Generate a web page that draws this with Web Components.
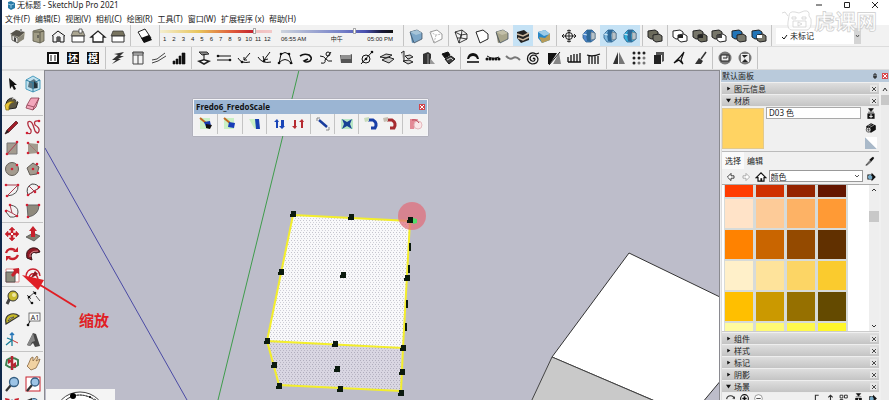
<!DOCTYPE html>
<html lang="zh-CN">
<head>
<meta charset="utf-8">
<title>无标题 - SketchUp Pro 2021</title>
<style>
  body {
    margin: 0;
    font: 8px/12px "Noto Sans", "Noto Sans CJK SC", sans-serif;
    color: #222;
    background: #f0f0f0;
  }
</style>
</head>
<body>
<su-app>
  <su-titlebar slot="top" name="无标题 - SketchUp Pro 2021"></su-titlebar>
  <su-menubar slot="top" items="文件(F)|编辑(E)|视图(V)|相机(C)|绘图(R)|工具(T)|窗口(W)|扩展程序 (x)|帮助(H)"></su-menubar>

  <su-toolbar slot="top" style="height: 22px; padding-left: 4px">
    <su-group icons="iso box front house2 home shed" label="视图" style="width: 125px"></su-group>
    <su-group icons="shadow" label="阴影" style="width: 29px"></su-group>
    <su-shadows></su-shadows>
    <su-group icons="xray backedge" label="样式" style="width: 45px"></su-group>
    <su-group icons="wire hidden shaded textured mono" active="textured" label="样式" style="width: 108px"></su-group>
    <su-group icons="target section section1 section2" active="section1 section2" label="截面" style="width: 86px"></su-group>
    <su-group icons="shell" label="实体" style="width: 25px"></su-group>
    <su-group icons="intersect union subtract trim split" label="实体工具" style="width: 104px"></su-group>
    <su-tagbox></su-tagbox>
  </su-toolbar>

  <su-toolbar slot="top" style="height: 23px; padding-left: 39px">
    <su-group icons="sheet char1 char2" label="插件" style="width: 65px"></su-group>
    <su-group icons="zig window slope stairs" label="建筑" style="width: 86px"></su-group>
    <su-group icons="drop beam curve1 curve2 arch hook pipe slab circ layers1 layers2 door solids" label="曲面" style="width: 269px"></su-group>
    <su-group icons="bridge dots wave spiral cut comb fence" label="工具" style="width: 146px"></su-group>
    <su-group icons="mirror grid9 copy compass broom" label="阵列" style="width: 106px"></su-group>
    <su-group icons="round1 round2" label="清理" style="width: 45px"></su-group>
  </su-toolbar>

  <su-toolbox slot="left">
    <su-group vertical icons="select component paint eraser" label="选择" style="height: 43px"></su-group>
    <su-group vertical icons="pencil freehand rect rrect circle polygon arc arc2 arc3 pie" label="绘图" style="height: 107px"></su-group>
    <su-group vertical icons="move pushpull rotate follow scale offset" label="编辑" style="height: 64px"></su-group>
    <su-group vertical icons="tape dimension protractor text axes text3d" label="测量" style="height: 65px"></su-group>
    <su-group vertical icons="orbit pan zoom zoomwin extents prev" label="相机" style="height: 65px"></su-group>
  </su-toolbox>

  <su-canvas slot="main">
    <su-floatbar name="Fredo6_FredoScale">
      <su-group icons="fs1" label="缩放" style="width: 24px"></su-group>
      <su-group icons="fs2" label="缩放" style="width: 25px"></su-group>
      <su-group icons="fs3" label="锥化" style="width: 24px"></su-group>
      <su-group icons="fsblue fsred" label="剪切" style="width: 44px"></su-group>
      <su-group icons="fs4" label="拉伸" style="width: 24px"></su-group>
      <su-group icons="fs5" label="扭转" style="width: 24px"></su-group>
      <su-group icons="fs6 fs7" label="弯曲" style="width: 44px"></su-group>
      <su-group icons="fs8" label="设置" style="width: 24px; border-right: 0"></su-group>
    </su-floatbar>
    <su-note slot="note">缩放</su-note>
  </su-canvas>

  <su-tray slot="right" name="默认面板">
    <su-section name="图元信息"></su-section>
    <su-section name="材质" open><su-materials></su-materials></su-section>
    <su-section name="组件"></su-section>
    <su-section name="样式"></su-section>
    <su-section name="标记"></su-section>
    <su-section name="阴影"></su-section>
    <su-section name="场景" open><su-scenes></su-scenes></su-section>
  </su-tray>
</su-app>

<script>
// 20x20 drawings, one per tool
const K = 'fill="none" stroke="#111"';
const R = 'fill="none" stroke="#a84050" stroke-width="1"';
const dot = (x, y, c = '#d22035') => `<circle cx="${x}" cy="${y}" r="1.3" fill="${c}"/>`;
const cube = (a, b, c) => `<path d="M4 6L11 4L11 15L6 17Z" fill="${a}"/><path d="M4 6L11 4L16 7L16 13L8 17Z" fill="${b}" stroke="#345" stroke-width=".7"/><path d="M4 6L11 4L16 7L10 9Z" fill="${c}"/>`;
const twoBoxes = (a, b) => `<path d="M3 5L10 4L13 6V12L6 13L3 11Z" fill="${a}" stroke="#222"/><path d="M8 9L14 8L17 10V15L11 16L8 14Z" fill="${b}" stroke="#222"/>`;
const sect = (c) => `<path d="M4 8L8 4L13 4L16 7V13L12 16L7 16L4 12Z" fill="${c}" stroke="#2b5f8c" stroke-width=".8"/><path d="M8 4L13 4L11 9L12 16L8 15L7 9Z" fill="#2d6796"/><path d="M12 6L16 7V13L12 14Z" fill="#b9c3c9" stroke="#5c6d78" stroke-width=".6"/><path d="M4 8L8 9" stroke="#d5ecf8"/>`;
const glyph = (t) => `<rect x="4" y="4" width="12" height="12" fill="#111"/><text x="10" y="14" font-size="10" font-weight="700" text-anchor="middle" fill="#fff">${t}</text>`;
const fsBase = '<path d="M4 4H14V15H4Z" fill="#c9f0c4"/><path d="M4 4L10 9" stroke="#c06a20" stroke-width="2"/>';

const ICONS = {
  iso: '<path d="M3 9L9 4L17 7L16 13L9 17L4 14Z" fill="#b7b3a0"/><path d="M2 8L8 4L17 6L11 11Z" fill="#55524a"/><path d="M4 9L10 12V17L4 14Z" fill="#e4e2dc" stroke="#333" stroke-width=".7"/><path d="M6 11L8 12V16L6 15Z" fill="#444"/><path d="M10 12L16 8V13L10 17Z" fill="#8b887a"/><path d="M12 3H14V6H12Z" fill="#999"/>',
  box: '<path d="M5 5L13 3L16 5V15L12 17L5 15Z" fill="#a19d86" stroke="#5b5849" stroke-width=".8"/><path d="M12 6V17M6 6L12 6L16 5" stroke="#5b5849" fill="none"/><path d="M10 9V12" stroke="#333"/>',
  front: `<path d="M4 10L10 5L17 10M5 10V16H9V11H12V16H16V10" ${K}/><path d="M9 11H12V16H9Z" fill="#555"/>`,
  house2: '<path d="M5 5H15L17 10H3Z" fill="#aaa591" stroke="#444" stroke-width=".7"/><path d="M4 10H16V16H4Z" fill="#fff" stroke="#333"/><path d="M11 3H14V7H11Z" fill="#fff" stroke="#333" stroke-width=".7"/>',
  home: '<path d="M3 11L10 5L17 11H15V16H5V11Z" fill="#fff" stroke="#222" stroke-width="1.3"/>',
  shed: '<path d="M5 5H15L17 10H3Z" fill="#77735f" stroke="#333" stroke-width=".7"/><path d="M4 10H16V16H4Z" fill="#fff" stroke="#333"/>',
  shadow: '<path d="M3 6L10 3L16 12L9 16Z" fill="#fff" stroke="#222"/><path d="M6 12L14 9L17 14L9 17Z" fill="#111"/>',
  xray: cube('#5d8fb6', '#7da7c8', '#a6c4d8'),
  backedge: '<path d="M4 6L11 4L16 8V13L8 17Z" fill="#fff" stroke="#999"/><path d="M4 6L10 9L16 8M10 9L8 17" fill="none" stroke="#bbb" stroke-dasharray="2 1"/>',
  wire: `<path d="M4 6L11 4L16 8V13L8 17L4 6L10 9L16 8M10 9L8 17M11 4L10 12L16 13M10 12L6 12" ${K} stroke-width=".8"/>`,
  hidden: '<path d="M4 6L11 4L16 8V13L8 17Z" fill="#fff" stroke="#222"/>',
  shaded: cube('#8a8772', '#a9a68c', '#c2bfa8'),
  textured: '<path d="M4 6L11 4L16 8V14L8 17L4 12Z" fill="#222"/><path d="M4 8L10 10L16 7M5 12L10 14L16 11" stroke="#c9b79f" stroke-width="1.4" fill="none"/>',
  mono: '<path d="M4 6L11 4L16 8V14L8 17L4 12Z" fill="#2987c6"/><path d="M5 11L11 12L16 7V14L8 17Z" fill="#b79b58"/><path d="M4 6L11 4L16 8L10 10Z" fill="#9ccbe8"/>',
  target: `<circle cx="10" cy="10" r="3.5" ${K}/><path d="M3 10H17M10 4V16M5 8L3 10L5 12M15 8L17 10L15 12M8 5L10 4L12 5M8 15L10 16L12 15" ${K} stroke-width=".9"/>`,
  section: sect('#4f86cc'), section1: sect('#7eb7dd'), section2: sect('#35b1dc'),
  shell: twoBoxes('#6c6b5c', '#77766a'),
  intersect: twoBoxes('#fff', '#fff') + '<path d="M8 9H13V12H8Z" fill="#222"/>',
  union: twoBoxes('#77766a', '#6c6b5c') + '<path d="M8 9H13V12H8Z" fill="#222"/>',
  subtract: twoBoxes('#77766a', '#fff') + '<path d="M8 9H13V12H8Z" fill="#444"/>',
  trim: twoBoxes('#2275b8', '#77766a'),
  split: twoBoxes('#2275b8', '#77766a') + '<path d="M8 9H13V12H8Z" fill="#fff"/>',
  sheet: '<rect x="4" y="4" width="12" height="12" fill="#111"/><path d="M6 6H14V14H6Z" fill="#fff"/><path d="M7 8H9M7 10H9M7 12H9M11 8H13M11 10H13M11 12H13" stroke="#111"/>',
  char1: glyph('坯'), char2: glyph('模'),
  zig: '<path d="M6 6L16 4L12 8H16L10 11H13L4 16L8 12H4L10 7Z" fill="#333"/>',
  window: '<path d="M5 4H15V16H5ZM5 7H15M10 7V16M4 5H16" fill="none" stroke="#444"/>',
  slope: '<path d="M3 12L8 11L16 5M3 15L9 13L17 8" fill="none" stroke="#444"/>',
  stairs: '<path d="M4 13H6V16H4ZM7 11H9V16H7ZM10 8H12V16H10ZM13 5H16V16H13Z" fill="#111" stroke="#111" stroke-width=".6"/>',
  drop: `<path d="M5 4H13L15 6L8 7Z" fill="#888" stroke="#333"/><path d="M10 6V13" ${K}/><path d="M3 13L10 11L17 13L10 17Z" fill="#222"/><path d="M7 13.500L10 12.500L13 13.500L10 15Z" fill="#fff"/>`,
  beam: `<path d="M3 8H17M3 12H17" ${K}/>` + dot(4, 8, '#111') + dot(16, 12, '#111'),
  curve1: `<path d="M3 10Q6 16 15 14M15 5L9 12M9 9V12H12" ${K}/>` + dot(7, 14, '#111'),
  curve2: `<path d="M3 9Q7 16 16 14M15 4L9 12M8 8L9 12L13 11" ${K}/>` + dot(9, 13, '#111'),
  arch: `<path d="M4 16L6 6Q10 3 14 6L17 16M4 15Q10 8 16 15" ${K}/>` + dot(6, 6, '#111') + dot(14, 6, '#111') + dot(4, 15, '#111') + dot(16, 15, '#111'),
  hook: `<path d="M4 8Q8 5 13 7Q17 10 14 13Q10 15 8 13L12 11" ${K} stroke-width="1.600"/>`,
  pipe: `<path d="M4 8Q8 8 10 11T16 13M5 15Q10 16 9 12L15 4" ${K}/><circle cx="12" cy="6" r="2" ${K}/>`,
  slab: '<path d="M4 7H14L16 6V15H5Z" fill="#555"/><path d="M5 8H15M5 10H15" stroke="#ccc"/>',
  circ: `<circle cx="9" cy="11" r="4" ${K}/><path d="M4 16L15 4" ${K}/>` + dot(15, 4, '#111') + dot(9, 11, '#111'),
  layers1: '<path d="M3 9L9 6L15 7L10 10ZM5 12L11 9L17 11L12 15Z" fill="#ccc" stroke="#222"/>',
  layers2: '<path d="M4 5L7 3V14M8 8L13 7L16 9L11 11ZM6 13L12 12L16 14L11 16Z" fill="#ccc" stroke="#222"/>',
  door: '<path d="M5 6L10 4L13 6V16H5Z" fill="#333"/><path d="M10 6V16" stroke="#999"/><path d="M12 10L17 16H12Z" fill="#999"/>',
  solids: '<path d="M4 6L10 4L12 7L7 10Z" fill="#111" stroke="#111"/><path d="M7 11L13 8L17 11L11 16Z" fill="#444" stroke="#111"/><path d="M9 12L13 10L15 12" fill="none" stroke="#ccc"/>',
  bridge: `<path d="M4 11Q5 5 10 5T16 11H14Q13 8 10 8T6 11Z" fill="#111"/><path d="M4 14H16" ${K} stroke-width="1.600"/>`,
  dots: '<path d="M4 8Q10 12 16 9" fill="none" stroke="#111"/>' + [4, 7, 10, 13, 16].map(x => `<circle cx="${x}" cy="11" r="1.500" fill="#111"/>`).join(''),
  wave: '<path d="M3 8Q7 12 10 10T17 12" fill="none" stroke="#777" stroke-width="2"/>',
  spiral: `<path d="M16 5L13 6Q8 3 5 8Q3 14 9 16Q15 16 15 11Q14 7 10 7Q7 8 7 11Q8 14 11 13Q13 11 11 10L10 11" ${K} stroke-width="1.200"/>`,
  cut: '<path d="M4 5H13L6 16H4Z" fill="#111"/><path d="M15 5L17 16H9Z" fill="#888"/><path d="M5 17L16 4" stroke="#222"/>',
  comb: `<path d="M4 9V14M7 7V14M10 6V14M13 6V14M16 5V14M4 14H17" ${K} stroke-width="1.300"/>`,
  fence: `<path d="M3 7Q9 9 16 6M5 8V16M8 8V16M11 8V16M14 8V16" ${K} stroke-width="1.300"/>`,
  mirror: '<path d="M9 4V16H4Z" fill="#333"/><path d="M10 4L16 16H10Z" fill="#777"/>',
  grid9: [5, 10, 15].map(x => [5, 10, 15].map(y => `<circle cx="${x}" cy="${y}" r="1.500" fill="${x + y > 20 ? '#777' : '#222'}"/>`).join('')).join(''),
  copy: '<path d="M7 4H15V13L13 14V7H7Z" fill="#555"/><path d="M5 7H12V16H5Z" fill="#222"/>',
  compass: '<path d="M14 4L11 12L13 16L9 12L4 15L10 9Z" fill="#fff" stroke="#111" stroke-width="1.200"/>',
  broom: '<path d="M16 4L11 11" stroke="#333" stroke-width="1.500"/><path d="M9 10L13 13L11 16H5Z" fill="#333"/>',
  round1: '<circle cx="10" cy="10" r="6.500" fill="#777"/><path d="M6 7H14V13H6Z" fill="#eee" stroke="#222"/><path d="M8 10H12V7" fill="none" stroke="#222"/>',
  round2: '<circle cx="10" cy="10" r="6.500" fill="#777"/><path d="M6 6H14V14H6Z" fill="#eee"/><path d="M7 7H13L9 10L13 14H7L10 11Z" fill="#222"/>',

  select: '<path d="M7 4L8 15L10 12L12 16L14 15L12 11L15 11Z" fill="#111"/>',
  component: '<path d="M3 6L10 2L17 6V15L10 18L3 15Z" fill="#bfe0ee" stroke="#4d9fc0"/><path d="M6 8L11 5L15 9V14L10 15L5 13Z" fill="#5b7684"/><path d="M3 6L10 9L17 6M10 9V18" fill="none" stroke="#2f7b9d"/><path d="M11 7L14 10V14H11Z" fill="#24333b"/>',
  paint: '<path d="M4 10Q5 4 11 4L16 8L14 14L7 15Z" fill="#5d5743" stroke="#222"/><path d="M3 11Q7 6 12 8Q6 9 7 16H4Z" fill="#e8c53a" stroke="#7c6810" stroke-width=".7"/><path d="M10 5Q14 3 15 8" fill="none" stroke="#ddd"/>',
  eraser: '<path d="M8 4L16 4L13 13L10 16L3 14L4 11Z" fill="#f3a6bb" stroke="#8c3d51" stroke-width=".8"/><path d="M4 11L11 13L16 4M11 13L10 16" fill="none" stroke="#8c3d51" stroke-width=".8"/>',
  pencil: '<path d="M3 17L5 13L14 4L16 6L7 15Z" fill="#a21d29" stroke="#4d1318" stroke-width=".7"/><path d="M3 17L5 13L7 15Z" fill="#222"/>',
  freehand: '<path d="M4 16Q9 18 8 13Q4 8 5 5Q8 3 10 8L12 14Q15 18 16 14Q17 11 12 8Q10 3 16 4" fill="none" stroke="#b22b3c" stroke-width="1.300"/>' + dot(4, 16) + dot(16, 4),
  rect: `<path d="M5 5H15V16H5Z" fill="#a39b8f" stroke="#777"/><path d="M5 16L15 5" ${R}/>` + dot(15, 4) + dot(5, 16),
  rrect: `<path d="M5 5L15 6V15L5 16Z" fill="#a39b8f"/><path d="M5 5L15 15" ${R} opacity=".4"/>` + dot(5, 5) + dot(15, 4) + dot(5, 15) + dot(15, 15),
  circle: '<circle cx="10" cy="10" r="6.500" fill="#a39b8f" stroke="#615d56"/>' + dot(10, 10) + dot(15, 6),
  polygon: '<path d="M10 4L16 8L14 15L7 16L4 9Z" fill="#a39b8f" stroke="#615d56"/>' + dot(10, 10) + dot(14, 5) + dot(15, 14),
  arc: `<path d="M4 5H16M16 5L5 16" ${R}/><path d="M16 5Q17 15 5 16" fill="none" stroke="#555"/>` + dot(4, 5) + dot(16, 5) + dot(5, 16),
  arc2: '<path d="M5 15Q2 7 9 4Q15 4 16 8Z" fill="none" stroke="#444"/><path d="M6 6L12 12M5 15L16 8" fill="none" stroke="#a84050"/>' + dot(5, 15) + dot(16, 7) + dot(12, 12),
  arc3: `<path d="M4 9L10 12L15 15M8 4L10 12" ${R}/><path d="M8 4Q16 5 16 11T8 16L4 11" fill="none" stroke="#555"/>` + dot(8, 4) + dot(4, 10) + dot(15, 15),
  pie: '<path d="M4 4H16Q16 14 5 16Z" fill="#8f8a7d" stroke="#666"/>' + dot(4, 4) + dot(16, 4) + dot(5, 16),
  move: '<path d="M10 3L13 6H11V9H14V7L17 10L14 13V11H11V14H13L10 17L7 14H9V11H6V13L3 10L6 7V9H9V6H7Z" fill="#c8202c" stroke="#c8202c" stroke-width=".5"/><path d="M9 9H11V11H9Z" fill="#fff"/>',
  pushpull: '<path d="M3 13L10 9L17 12L11 17Z" fill="#847f72" stroke="#444" stroke-width=".7"/><path d="M10 2L14 7H12V13H8V7H6Z" fill="#c8202c"/>',
  rotate: '<path d="M4 9Q6 3 13 6M16 11Q13 17 7 14" fill="none" stroke="#c8202c" stroke-width="2.300"/><path d="M11 8L16 8L16 3ZM9 12L4 12L4 17Z" fill="#c8202c"/>',
  follow: '<path d="M4 14Q2 6 9 4Q15 3 17 8L13 9Q9 7 8 12L9 16Z" fill="#8e1a25" stroke="#331317"/><path d="M7 13Q6 7 15 7" fill="none" stroke="#d68b90"/>',
  scale: '<path d="M4 4H17V17H4Z" fill="#fff" stroke="#d88"/><path d="M4 7H13V17H4Z" fill="#8f8e7e" stroke="#555"/><path d="M17 3V9L15 8L11 12L9 10L12 6L11 4Z" fill="#c8202c"/>',
  offset: '<path d="M3 11Q4 4 10 4T17 11" fill="none" stroke="#c8202c" stroke-width="1.300"/><path d="M6 13Q7 8 11 9T15 16" fill="none" stroke="#c8202c" stroke-width="1.500"/><path d="M7 14L12 6L15 9Z" fill="#8d1620"/>',
  tape: '<path d="M8 10L5 16" stroke="#444" stroke-width="3"/><circle cx="11" cy="8" r="5" fill="#c9ba2f" stroke="#333"/><circle cx="12" cy="7" r="2" fill="#eee7a2"/>',
  dimension: '<path d="M6 9L12 4M4 7L8 11M10 3L13 7M9 16L5 10M13 8L17 13" fill="none" stroke="#444" stroke-width=".9"/>' + dot(6, 9, '#111') + dot(12, 5, '#111') + dot(9, 15, '#111'),
  protractor: '<path d="M4 15Q2 7 9 5Q14 4 17 7Z" fill="#c6b928" stroke="#333" stroke-width="1.200"/><path d="M6 12Q7 8 12 8Z" fill="#f0f0f0" stroke="#333" stroke-width=".7"/>',
  text: '<rect x="6" y="4" width="11" height="8" fill="#fff" stroke="#555" stroke-width=".8"/><text x="12" y="11" font-size="7" text-anchor="middle" fill="#222">A1</text><path d="M7 12L5 16" stroke="#111"/>' + dot(5, 16, '#111'),
  axes: '<path d="M10 10V3M8 5L10 3L12 5" fill="none" stroke="#2877b8" stroke-width="1.500"/><path d="M10 10L16 13" stroke="#c33"/><path d="M10 10L4 15M5 8L10 10V16" fill="none" stroke="#187c98" stroke-width="1.300"/>',
  text3d: '<path d="M10 3L13 4L17 16L12 17L10 13L7 16L4 15Z" fill="#464646"/><path d="M10 3L12 11L9 12L7 16L4 15Z" fill="#888"/>',
  orbit: '<path d="M5 7Q10 3 16 7L16 12Q10 17 4 12Z" fill="none" stroke="#3e7f51" stroke-width="2"/><path d="M10 3V17" stroke="#b62632" stroke-width="2.500"/><path d="M6 6L11 8L6 11ZM14 9L9 12L14 15Z" fill="#b62632"/>',
  pan: '<path d="M5 12L8 5L10 4L10 8L14 3L15 5L13 8L17 6L16 9L13 15L8 17L4 13Z" fill="#f1d2a2" stroke="#876640" stroke-width=".8"/>',
  zoom: '<path d="M4 17L9 11" stroke="#333" stroke-width="2.200"/><circle cx="12" cy="8" r="4.500" fill="#9dc4e6" stroke="#345d80" stroke-width="1.300"/>',
  zoomwin: '<rect x="3" y="3" width="14" height="14" fill="#fff" stroke="#c8202c"/><path d="M4 17L9 11" stroke="#333" stroke-width="2.200"/><circle cx="12" cy="8" r="4" fill="#9dc4e6" stroke="#345d80" stroke-width="1.300"/>',
  extents: '<path d="M3 3L8 4L4 8ZM17 3L12 4L16 8Z" fill="#c8202c"/><circle cx="10" cy="9" r="4" fill="#9dc4e6" stroke="#345d80"/>',
  prev: '<circle cx="11" cy="8" r="4.500" fill="#9dc4e6" stroke="#345d80"/><path d="M4 5L9 3V9Z" fill="#333"/>',

  fs1: fsBase + '<path d="M8 8L14 7L15 12L10 13Z" fill="#1638ad"/><path d="M10 10L16 11L14 15L10 14Z" fill="#111"/>',
  fs2: fsBase + '<path d="M9 8L15 9L14 14L8 13Z" fill="#173db8"/>',
  fs3: '<path d="M4 5H11V15L9 14Z" fill="#c9f0c4"/><path d="M10 5H14L15 15H11Z" fill="#1640b0"/>',
  fsblue: '<path d="M7 14V8H5L8 5L10 8H9V14ZM12 6V12H10L13 15L16 12H15V6Z" fill="#1945b7"/>',
  fsred: '<path d="M6 6V12H4L7 15L9 12H8V6ZM13 14V8H11L14 5L16 8H15V14Z" fill="#b62a30"/>',
  fs4: '<path d="M6 6L14 13" stroke="#193c9d" stroke-width="2.500"/><path d="M4 7V4H7M13 16H16V13" fill="none" stroke="#888"/>',
  fs5: '<path d="M4 5H16V15H4Z" fill="#b8e7c6"/><path d="M5 5L10 8L15 5L13 10L15 15L10 12L5 15L7 10Z" fill="#174295"/>',
  fs6: '<path d="M7 6H12Q17 9 14 14H10" fill="none" stroke="#193fa7" stroke-width="3"/><path d="M3 4L8 3V7L4 8Z" fill="#c7dbbb"/>',
  fs7: '<path d="M7 6H12Q17 9 14 14H10" fill="none" stroke="#a62c31" stroke-width="3"/><path d="M3 4L8 3V7L4 8Z" fill="#c4beb2"/>',
  fs8: '<path d="M5 5H13L9 15H5Z" fill="#e38a96"/><circle cx="13" cy="11" r="4" fill="#fae6e8" stroke="#e5b8bd"/><path d="M7 6Q12 5 14 9" fill="none" stroke="#b54454"/>',

  back: '<path d="M4 10L10 4V8H15V12H10V16Z" fill="#fff" stroke="#222" stroke-width="1.400"/>',
  next: '<path d="M16 10L10 4V8H5V12H10V16Z" fill="#fff" stroke="#999" stroke-width="1.300"/>',
  model: '<path d="M2 11L10 3L18 11H15V17H5V11Z" fill="#fff" stroke="#111" stroke-width="2"/><path d="M9 12H12V17H9Z" fill="#111"/>',
  material: '<path d="M4 6H11V3L18 10L11 17V14H4Z" fill="#111"/><path d="M5 8L9 6L12 9V13L8 14L5 12Z" fill="#76a9c6"/>',
  save: '<path d="M4 9H16V18H4Z" fill="#111"/><path d="M6 1H14L10 6ZM5 7H15" fill="#111" stroke="#111"/><path d="M10 10V17M7 14H13" stroke="#fff" stroke-width="1.500"/>',
  addmat: '<path d="M2 7L10 2L18 6V13L10 18L3 14Z" fill="#111"/><path d="M5 7L11 4M8 9L15 5" stroke="#ddd"/><circle cx="6" cy="13" r="4" fill="#fff" stroke="#111"/><path d="M3 13H9M6 10V16" stroke="#111"/>',
  picker: '<path d="M3 17L10 9L12 11L5 17Z" fill="#888" stroke="#222"/><path d="M9 8L12 5L15 3L17 5L15 8L12 11Z" fill="#111"/>',
  refresh: '<path d="M3 11Q4 5 10 5T17 11" fill="none" stroke="#333" stroke-width="2"/><path d="M13 10H18V6Z" fill="#333"/>',
  plus: '<circle cx="10" cy="10" r="7" fill="#fff" stroke="#111" stroke-width="2"/><path d="M6 10H14M10 6V14" stroke="#111" stroke-width="3"/>',
  minus: '<circle cx="10" cy="10" r="7" fill="#fff" stroke="#555"/><path d="M6 10H14" stroke="#555" stroke-width="2"/>',
  down: '<path d="M8 18V4H14" fill="none" stroke="#333" stroke-width="2"/>',
  up: '<path d="M10 18V4M6 8L10 4L14 8" fill="none" stroke="#333" stroke-width="2"/>',
  view: '<path d="M2 4H7V9H2ZM10 4H15V9H10ZM2 12H7V17H2Z" fill="#fff" stroke="#111" stroke-width="1.500"/><path d="M13 14H20L16 18Z" fill="#111"/>',
};

const svg = (name) => `<svg viewBox="0 0 20 20" aria-hidden="true">${ICONS[name]}</svg>`;

class SuElement extends HTMLElement {
  connectedCallback() {
    if (this.shadowRoot) return;
    this.attachShadow({ mode: 'open' });
    const template = document.createElement('template');
    template.innerHTML = this.render();
    this.shadowRoot.appendChild(template.content.cloneNode(true));
  }

  get name() {
    return this.getAttribute('name') || '';
  }
}

const RESET = `
  * { box-sizing: border-box; }
  button, select, input { font: inherit; color: inherit; margin: 0; padding: 0; }
  button { border: 0; background: none; display: grid; place-items: center; }
  svg { display: block; }
`;

customElements.define('su-app', class extends SuElement {
  render() {
    return `
      <style>
        :host { display: flex; flex-direction: column; height: 100vh; overflow: hidden; border-left: 2px solid #10284a; box-sizing: border-box; }
        .body { flex: 1; min-height: 0; display: grid; grid-template-columns: auto 1fr 169px; }
      </style>
      <slot name="top"></slot>
      <div class="body">
        <slot name="left"></slot><slot name="main"></slot><slot name="right"></slot>
      </div>`;
  }
});

customElements.define('su-titlebar', class extends SuElement {
  render() {
    return `
      <style>${RESET}
        :host { display: flex; height: 12px; padding-left: 4px; background: #fff; font-size: 8px; line-height: 10px; }
        .logo { width: 10px; height: 10px; margin-right: 1px; }
        .title { flex: 1; }
        .win { width: 28px; height: 10px; }
        .win svg { width: 8px; height: 8px; }
        .brand { position: absolute; z-index: 5; right: 4px; top: 4px; width: 104px; height: 36px; pointer-events: none; overflow: visible; }
      </style>
      <svg class="logo" viewBox="0 0 10 10"><path d="M2 2L5 1L9 3V8L5 10L2 8Z" fill="#287aa6"/><path d="M2 4L5 5V8M5 5L8 4" stroke="#8fc4df" fill="none"/></svg>
      <span class="title">${this.name}</span>
      <button class="win" aria-label="最小化"><svg viewBox="0 0 8 8"><path d="M1 4H7" stroke="#222"/></svg></button>
      <button class="win" aria-label="最大化"><svg viewBox="0 0 8 8"><path d="M1.500 1.500H6.500V6.500H1.500Z" fill="none" stroke="#222"/></svg></button>
      <button class="win" aria-label="关闭"><svg viewBox="0 0 8 8"><path d="M1 1L7 7M7 1L1 7" stroke="#222"/></svg></button>
      <svg class="brand" viewBox="0 -4 104 36" fill="#fff" fill-opacity=".7" stroke="#cdcdcd" stroke-width=".7">
        <path d="M1 5L4 4L7 8M8 8Q8 3 14 4L18 5L23 3Q29 2 28 8L30 11Q31 21 26 22H11Q6 22 7 14Z"/>
        <path d="M11 9H15V11H11ZM21 9H25V11H21ZM12 13H25V19H12Z"/><path d="M17 14L21 16L17 18Z"/>
        <text x="33" y="21" font-size="21" font-weight="700" font-family="Noto Sans CJK SC">虎课网</text>
      </svg>`;
  }
});

customElements.define('su-menubar', class extends SuElement {
  render() {
    const items = this.getAttribute('items').split('|');
    return `
      <style>${RESET}
        :host { display: flex; gap: 5px; height: 13px; padding-left: 3px; background: #fff; }
        button { line-height: 13px; white-space: nowrap; }
      </style>
      ${items.map(i => `<button>${i}</button>`).join('')}`;
  }
});

customElements.define('su-toolbar', class extends SuElement {
  render() {
    return `
      <style>
        :host { display: flex; align-items: stretch; box-sizing: border-box; background: #f2f2f2; border-bottom: 1px solid #dcdcdc; }
      </style>
      <slot></slot>`;
  }
});

customElements.define('su-group', class extends SuElement {
  render() {
    const active = (this.getAttribute('active') || '').split(' ');
    const icons = this.getAttribute('icons').split(' ');
    return `
      <style>${RESET}
        :host { display: grid; grid-auto-flow: column; grid-auto-columns: 1fr; flex: none; box-sizing: border-box; padding: 0 2px; border-right: 1px solid #c4c4c4; }
        :host([vertical]) { grid-auto-flow: row; grid-template-columns: 1fr 1fr; grid-auto-columns: auto; grid-auto-rows: 1fr; padding: 1px 0; border-right: 0; border-bottom: 1px solid #c4c4c4; }
        button { min-width: 0; min-height: 0; }
        svg { width: 20px; height: 20px; margin: -2px; overflow: visible; }
        .on { background: #c5e2f5; }
      </style>
      ${icons.map(i => `<button class="${active.includes(i) ? 'on' : ''}" aria-label="${this.getAttribute('label')}">${svg(i)}</button>`).join('')}`;
  }
});

customElements.define('su-shadows', class extends SuElement {
  render() {
    const months = Array.from({ length: 12 }, (_, i) => `<span>${i + 1}</span>`).join('');
    return `
      <style>${RESET}
        :host { display: flex; width: 243px; flex: none; font: 6px/8px "Liberation Sans", "Noto Sans CJK SC", sans-serif; border-right: 1px solid #c4c4c4; }
        .date { width: 112px; padding-top: 3px; }
        .time { width: 112px; padding-top: 3px; margin-left: 9px; }
        input { display: block; appearance: none; width: 100%; height: 6px; background: none; }
        input::-webkit-slider-runnable-track { height: 3px; background: var(--track); }
        input::-webkit-slider-thumb { appearance: none; width: 3px; height: 6px; margin-top: -2px; background: #fff; border: 1px solid #aaa; }
        .date { --track: linear-gradient(90deg, #f4efd0, #e8c45a 35%, #df5a3a 65%, #c02030 84%, #f0c0c0 86%, #f2c8c8); }
        .time { --track: linear-gradient(90deg, #cdd3dc, #7480c8 55%, #4a50b0 75%, #181838 90%, #111); }
        .scale { display: flex; justify-content: space-between; padding: 1px 0; }
        .date .scale { display: grid; grid-template-columns: repeat(12, 1fr); text-align: center; }
      </style>
      <div class="date">
        <input type="range" min="0" max="100" value="85" aria-label="日期">
        <div class="scale">${months}</div>
      </div>
      <div class="time">
        <input type="range" min="0" max="100" value="66" aria-label="时间">
        <div class="scale"><span>06:55 AM</span><span>中午</span><span>05:00 PM</span></div>
      </div>`;
  }
});

customElements.define('su-tagbox', class extends SuElement {
  render() {
    return `
      <style>${RESET}
        :host { display: flex; align-items: stretch; width: 85px; flex: none; padding: 3px 2px 2px 4px; position: relative; }
        select { flex: 1; appearance: none; border: 0; background: #fff; padding-left: 14px; font-size: 8px; }
        .tick { position: absolute; left: 8px; top: 8px; width: 8px; height: 8px; }
        .drop { width: 7px; background: #d4d4d4; }
        .drop svg { width: 5px; height: 5px; margin: 5px 1px; }
      </style>
      <select aria-label="标记"><option>未标记</option></select>
      <svg class="tick" viewBox="0 0 8 8"><path d="M2 4L4 6L7 2" fill="none" stroke="#111"/></svg>
      <span class="drop"><svg viewBox="0 0 5 5"><path d="M1 2L2.500 4L4 2" fill="none" stroke="#555"/></svg></span>`;
  }
});

customElements.define('su-toolbox', class extends SuElement {
  render() {
    return `
      <style>
        :host { display: flex; flex-direction: column; width: 42px; padding: 2px 1px 0 0; box-sizing: border-box; background: #f2f2f2; overflow: hidden; border-top: 1px solid #dcdcdc; }
        ::slotted(*) { flex: none; }
      </style>
      <slot></slot>`;
  }
});

// box handles: [x, y] on the model space
const HANDLES = [[293, 214], [351, 217], [410, 220], [281, 272], [343, 275], [407, 278], [267, 341], [335, 344], [403, 348],
  [274, 365], [337, 369], [402, 372], [279, 386], [340, 389], [401, 393]];
const BACK_HANDLES = [[410, 247], [409, 269], [407, 304], [406, 327]];

customElements.define('su-canvas', class extends SuElement {
  render() {
    return `
      <style>${RESET}
        :host { display: block; position: relative; min-width: 0; background: #bdbdca; border: solid #8a8a90; border-width: 1px 1px 0; box-sizing: border-box; }
        .scene { position: absolute; inset: 0; width: 100%; height: 100%; }
      </style>
      <svg class="scene" viewBox="45 71 674 329" preserveAspectRatio="xMinYMin slice">
        <defs>
          <pattern id="top" width="3" height="4" patternUnits="userSpaceOnUse"><rect width="3" height="4" fill="#f8f8fa"/><rect width="1" height="1" fill="#c4c4cd"/><rect x="1" y="2" width="1" height="1" fill="#d0d0d8"/></pattern>
          <pattern id="side" width="3" height="4" patternUnits="userSpaceOnUse"><rect width="3" height="4" fill="#d9d6e2"/><rect width="1" height="1" fill="#b0adbd"/><rect x="1" y="2" width="1" height="1" fill="#b8b5c4"/></pattern>
        </defs>
        <path d="M299 70L218 400" stroke="#3f9c4c" fill="none"/>
        <path d="M45 148L187 400" stroke="#4a4aa4" fill="none"/>
        <path d="M629 253L722 298V379L702 403L655 401L552 357Z" fill="#fff" stroke="#333"/>
        <path d="M552 357L657 402H531Z" fill="#c9c9c9" stroke="#444"/>
        <path d="M267 341L403 348L401 391L279 385Z" fill="url(#side)"/>
        <path d="M293 215L410 221L403 348L267 341Z" fill="url(#top)"/>
        <path d="M293 215L410 221L403 348L267 341ZM267 341L279 385L401 391L403 348" fill="none" stroke="#f3ee2c" stroke-width="2"/>
        <circle cx="412" cy="216" r="14" fill="#e0707c" fill-opacity=".75"/>
        ${HANDLES.map(([x, y]) => `<path d="M${x - 2} ${y - 3}H${x + 3}V${y + 3}H${x - 3}V${y}H${x - 2}Z" fill="#0b1a0e"/>`).join('')}
        ${BACK_HANDLES.map(([x, y]) => `<path d="M${x - 1} ${y - 4}H${x + 1}V${y + 4}H${x - 1}Z" fill="#0b1a0e"/>`).join('')}
        <path d="M413 218L417 219V223L413 224Z" fill="#52dc6c"/>
        <rect x="46" y="389" width="69" height="11" fill="#f4f4f4"/>
        <circle cx="80" cy="418" r="26" fill="#fff" stroke="#444"/><circle cx="80" cy="418" r="23" fill="none" stroke="#777"/>
        <path d="M66 400Q78 390 96 400" fill="none" stroke="#333" stroke-dasharray="2 1"/>
        <circle cx="73" cy="396" r="3" fill="#000"/><circle cx="90" cy="397" r="1" fill="#000"/>
      </svg>
      <slot></slot><slot name="note"></slot>`;
  }
});

customElements.define('su-floatbar', class extends SuElement {
  render() {
    return `
      <style>${RESET}
        :host { position: absolute; left: 148px; top: 28px; width: 235px; border: 1px solid #f4f4f8; box-shadow: 0 0 1px #777; background: #f2f2f2; box-sizing: border-box; }
        header { display: flex; justify-content: space-between; align-items: center; height: 14px; padding: 0 2px; background: #9bb5d3; font: 700 8px/14px "Open Sans", "Noto Sans CJK SC", sans-serif; color: #111; }
        button { width: 6px; height: 6px; background: #d0454c; }
        button svg { width: 4px; height: 4px; }
        .tools { display: flex; height: 21px; padding: 0 0 1px; }
      </style>
      <header>${this.name}<button aria-label="关闭"><svg viewBox="0 0 4 4"><path d="M0 0L4 4M4 0L0 4" stroke="#fff"/></svg></button></header>
      <div class="tools"><slot></slot></div>`;
  }
});

customElements.define('su-note', class extends SuElement {
  render() {
    return `
      <style>
        :host { position: absolute; left: -24px; top: 202px; color: #e01e24; font: 700 15px/20px "Noto Sans CJK SC", sans-serif; }
        svg { display: block; width: 60px; height: 37px; }
        span { display: block; padding-left: 58px; }
      </style>
      <svg viewBox="0 0 60 37"><path d="M1 2L23 7L17 17Z" fill="#e01e24"/><path d="M16 10L55 34" stroke="#e01e24" stroke-width="2"/></svg>
      <span><slot></slot></span>`;
  }
});

customElements.define('su-tray', class extends SuElement {
  render() {
    return `
      <style>${RESET}
        :host { display: grid; grid-template: 13px 1fr / 158px 1fr; min-height: 0; overflow: hidden; padding-left: 1px; background: #f0f0f0; }
        header { grid-column: 1 / 3; display: flex; align-items: center; height: 12px; gap: 4px; padding: 0 1px; background: #b9cadb; }
        header b { flex: 1; font-weight: 400; }
        header svg { width: 6px; height: 6px; }
        .close { background: #d8494e; }
        .list { min-height: 0; overflow: hidden; border-left: 1px solid #ddd; }
        .bar { margin-left: 2px; background: #ececec; }
        .bar i { display: block; height: 10px; background: #c8c8c8; }
        .bar svg { width: 8px; height: 12px; }
      </style>
      <header><b>${this.name}</b>
        <button aria-label="固定"><svg viewBox="0 0 6 6"><path d="M2 1H4V4H2ZM1 4H5M3 4V6" fill="none" stroke="#222"/></svg></button>
        <button class="close" aria-label="关闭"><svg viewBox="0 0 6 6"><path d="M1 1L5 5M5 1L1 5" stroke="#fff"/></svg></button>
      </header>
      <div class="list"><slot></slot></div>
      <div class="bar"><svg viewBox="0 0 8 12"><path d="M2 8L4 5L6 8" fill="none" stroke="#333"/></svg><i></i></div>`;
  }
});

customElements.define('su-section', class extends SuElement {
  render() {
    const arrow = this.hasAttribute('open') ? 'M0 0H8L4 6Z' : 'M2 0L7 3L2 6Z';
    return `
      <style>${RESET}
        :host { display: block; }
        header { display: flex; align-items: center; height: 12px; padding: 0 2px 0 4px; gap: 3px; background: linear-gradient(#dedede, #c4c4c4); border-bottom: 1px solid #eee; }
        header span { flex: 1; line-height: 11px; }
        header > svg { width: 5px; height: 5px; }
        button { width: 7px; height: 7px; background: #e6e6e6; }
        button svg { width: 4px; height: 4px; }
      </style>
      <header>
        <svg viewBox="0 0 8 6"><path d="${arrow}" fill="#111"/></svg><span>${this.name}</span>
        <button aria-label="关闭${this.name}"><svg viewBox="0 0 4 4"><path d="M0 0L4 4M4 0L0 4" stroke="#222" stroke-width=".8"/></svg></button>
      </header>
      <slot></slot>`;
  }
});

const SWATCHES = [
  '#ff3c00', '#cf3000', '#942400', '#641600',
  '#ffe3c8', '#fdcb98', '#fdb265', '#ff9a35',
  '#ff8200', '#c96500', '#944a00', '#613000',
  '#fff0c9', '#fee39b', '#fcd565', '#facb2e',
  '#ffbf00', '#cb9900', '#967000', '#644a00',
  '#fffba0', '#fffa74', '#fff94c', '#fff72a',
];

customElements.define('su-materials', class extends SuElement {
  render() {
    return `
      <style>${RESET}
        :host { display: block; }
        .head { display: grid; grid-template-columns: 42px 1fr 16px; column-gap: 2px; height: 45px; border-bottom: 1px solid #bbb; }
        .chip { background: #ffd362; margin: 1px 0 2px; border: 1px solid #e2c98c; }
        .head input { height: 12px; width: 100%; padding: 0 2px; border: 1px solid #a9a9a9; background: #fff; }
        .side { display: grid; grid-template-rows: 13px 15px 15px; justify-items: center; align-items: center; }
        .side svg, .tabs svg, .nav svg { width: 12px; height: 12px; }
        .tabs { display: grid; grid-template-columns: 22px 22px 1fr 18px; height: 17px; align-items: center; }
        .tabs button { height: 17px; line-height: 17px; }
        .tabs .on { background: #fafafa; }
        .nav { display: grid; grid-template-columns: 17px 14px 15px 95px 1fr; height: 15px; align-items: center; justify-items: center; }
        .nav select { width: 94px; height: 12px; padding-left: 1px; appearance: none; border: 1px solid #999; background: #fff; }
        .pick { position: relative; }
        .pick svg { position: absolute; right: 3px; top: 3px; width: 6px; height: 6px; }
        .list { display: grid; grid-template-columns: 1fr 10px; height: 148px; background: #fff; border-top: 1px solid #aaa; border-bottom: 1px solid #ccc; overflow: hidden; margin-bottom: 1px; }
        .grid { display: grid; align-content: start; justify-content: start; grid-template-columns: repeat(4, 31px); grid-auto-rows: 31px; padding-left: 2px; height: 164px; margin-top: -18px; overflow: hidden; }
        .grid button { border: solid #d7dbd9; border-width: 1px 2px 1px 1px; }
        .bar { background: #eee; display: flex; flex-direction: column; }
        .bar svg { width: 10px; height: 10px; }
        .bar i { height: 11px; margin: 16px 0 auto; background: #c8c8c8; }
      </style>
      <div class="head">
        <div class="chip"></div>
        <input value="D03 色" aria-label="材质名称">
        <div class="side">
          <button aria-label="显示辅助选择">${svg('save')}</button>
          <button aria-label="创建材质">${svg('addmat')}</button>
          <svg viewBox="0 0 12 12"><path d="M0 0L12 12H0Z" fill="#a9b9c9"/><path d="M0 0H12V12Z" fill="#fff"/></svg>
        </div>
      </div>
      <div class="tabs"><button class="on">选择</button><button>编辑</button><span></span><button aria-label="样本颜料">${svg('picker')}</button></div>
      <div class="nav">
        <button aria-label="后退">${svg('back')}</button><button aria-label="前进">${svg('next')}</button><button aria-label="在模型中">${svg('model')}</button>
        <div class="pick"><select aria-label="材质库"><option>颜色</option></select><svg viewBox="0 0 6 6"><path d="M1 2L3 4L5 2" fill="none" stroke="#555"/></svg></div>
        <button aria-label="详细信息">${svg('material')}</button>
      </div>
      <div class="list">
        <div class="grid">${SWATCHES.map(c => `<button style="background: ${c}" aria-label="${c}"></button>`).join('')}</div>
        <div class="bar"><svg viewBox="0 0 10 10"><path d="M3 6L5 4L7 6" fill="none" stroke="#333"/></svg><i></i><svg viewBox="0 0 10 10"><path d="M3 4L5 6L7 4" fill="none" stroke="#333"/></svg></div>
      </div>`;
  }
});

customElements.define('su-scenes', class extends SuElement {
  render() {
    const tool = (icon, label) => `<button aria-label="${label}">${svg(icon)}</button>`;
    return `
      <style>${RESET}
        :host { display: flex; gap: 3px; padding: 0 1px 0 3px; }
        button { flex: none; width: 11px; height: 11px; }
        svg { width: 11px; height: 11px; }
        span { flex: 1; }
      </style>
      ${tool('refresh', '更新')}${tool('plus', '添加')}${tool('minus', '移除')}<span></span>
      ${tool('down', '下移')}${tool('up', '上移')}${tool('view', '视图')}${tool('save', '显示')}${tool('material', '菜单')}`;
  }
});
</script>
</body>
</html>
